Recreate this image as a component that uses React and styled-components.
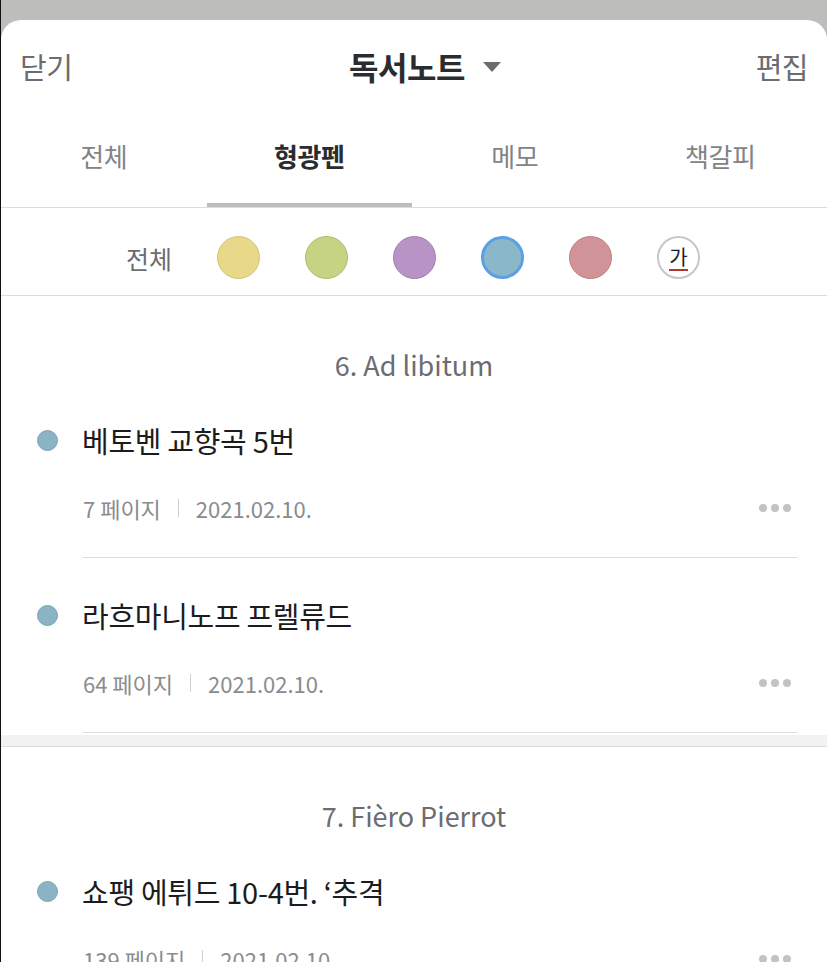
import { createGlobalStyle, styled } from "styled-components";

const GlobalStyle = createGlobalStyle`
  * { box-sizing: border-box; }
  html, body {
    margin: 0;
    padding: 0;
    background: #bdbebb;
    font-family: "Noto Sans CJK KR", "Noto Sans", sans-serif;
  }
`;

const Page = styled.div`
  width: 827px;
  height: 962px;
  overflow: hidden;
  background: #bdbebb;
  border-left: 1px solid #111;
  padding-top: 20px;
`;

const Sheet = styled.div`
  background: #fff;
  border-radius: 20px 20px 0 0;
  min-height: 942px;
`;

const Header = styled.div`
  height: 92px;
  display: grid;
  grid-template-columns: 1fr auto 1fr;
  align-items: center;
  padding: 0 19px 0 19px;
`;

const HeaderButton = styled.span`
  font-size: 29px;
  color: #6b6c70;
  justify-self: ${(p) => (p.$right ? "end" : "start")};
  letter-spacing: -0.5px;
`;

const Title = styled.div`
  display: flex;
  align-items: center;
  gap: 18px;
  font-size: 32px;
  font-weight: 700;
  color: #2b2c30;
  letter-spacing: -0.5px;
  margin-left: 22px;
`;

const Caret = styled.span`
  width: 0;
  height: 0;
  border-left: 9px solid transparent;
  border-right: 9px solid transparent;
  border-top: 10px solid #6b6c70;
  margin-top: 2px;
`;

const Tabs = styled.div`
  display: grid;
  grid-template-columns: repeat(4, 1fr);
  border-bottom: 1px solid #dcdcde;
  padding: 0 4px 0 0;
`;

const Tab = styled.div`
  height: 95px;
  display: flex;
  align-items: center;
  justify-content: center;
  padding-bottom: 4px;
  font-size: 26px;
  letter-spacing: -0.5px;
  font-weight: ${(p) => (p.$active ? 700 : 400)};
  color: ${(p) => (p.$active ? "#2b2c30" : "#828387")};
  border-bottom: 4px solid ${(p) => (p.$active ? "#bcbdc1" : "transparent")};
`;

const Filters = styled.div`
  height: 88px;
  display: flex;
  align-items: center;
  padding: 12px 0 0 125px;
  gap: 45px;
  border-bottom: 1px solid #dcdcde;
`;

const FilterLabel = styled.span`
  font-size: 25px;
  color: #6b6c70;
`;

const Swatch = styled.span`
  width: 43px;
  height: 43px;
  border-radius: 50%;
  flex-shrink: 0;
  background: ${(p) => p.$color};
  border: ${(p) => (p.$selected ? "3px solid #5b9fe8" : `1.5px solid ${p.$edge}`)};
  display: flex;
  align-items: center;
  justify-content: center;
`;

const TextSwatch = styled(Swatch)`
  background: #fff;
  border: 2px solid #c6c7ca;
  font-size: 20px;
  color: #1c1c1e;
  line-height: 1;
`;

const Ga = styled.span`
  display: inline-block;
  border-bottom: 2px solid #b8352c;
  padding-bottom: 2px;
  margin-top: 2px;
`;

const Section = styled.section`
  padding-top: 51px;
`;

const SectionTitle = styled.div`
  height: 36px;
  line-height: 36px;
  text-align: center;
  font-size: 27px;
  color: #6b6c70;
`;

const Item = styled.div`
  padding: 37px 0 0 0;
`;

const ItemTitle = styled.div`
  display: flex;
  align-items: center;
  height: 40px;
  padding-left: 36px;
  font-size: 29px;
  color: #1c1c1e;
  letter-spacing: -0.3px;
`;

const Dot = styled.span`
  width: 21px;
  height: 21px;
  border-radius: 50%;
  background: #8ab4c4;
  border: 1px solid #7aa3b3;
  margin-right: 24px;
  flex-shrink: 0;
`;

const Meta = styled.div`
  margin: 33px 30px 0 82px;
  height: 30px;
  display: flex;
  align-items: center;
  font-size: 22px;
  color: #8a8b8f;
`;

const Sep = styled.span`
  width: 1px;
  height: 18px;
  background: #cfd0d3;
  margin: 0 17px;
`;

const More = styled.span`
  margin-left: auto;
  margin-right: 6px;
  display: flex;
  gap: 4px;
`;

const MoreDot = styled.span`
  width: 8px;
  height: 8px;
  border-radius: 50%;
  background: #c2c3c6;
`;

const Divider = styled.div`
  margin: 34px 30px 0 82px;
  border-top: 1px solid #dcdcde;
`;

const Band = styled.div`
  height: 12px;
  margin-top: 2px;
  background: #f2f2f3;
  border-bottom: 1px solid #dcdcde;
`;

const tabs = ["전체", "형광펜", "메모", "책갈피"];

const swatches = [
  { color: "#e8d88a", edge: "#d4c476" },
  { color: "#c5d382", edge: "#adbd6c" },
  { color: "#b794c5", edge: "#a07fae" },
  { color: "#8ab8c8", edge: "#5b9fe8", selected: true },
  { color: "#d09498", edge: "#bb7f84" },
];

const sections = [
  {
    title: "6. Ad libitum",
    items: [
      { text: "베토벤 교향곡 5번", page: "7 페이지", date: "2021.02.10." },
      { text: "라흐마니노프 프렐류드", page: "64 페이지", date: "2021.02.10." },
    ],
  },
  {
    title: "7. Fièro Pierrot",
    items: [
      { text: "쇼팽 에튀드 10-4번. ‘추격", page: "139 페이지", date: "2021.02.10." },
    ],
  },
];

const NoteItem = ({ item }) => (
  <Item>
    <ItemTitle>
      <Dot />
      {item.text}
    </ItemTitle>
    <Meta>
      {item.page}
      <Sep />
      {item.date}
      <More>
        <MoreDot />
        <MoreDot />
        <MoreDot />
      </More>
    </Meta>
    <Divider />
  </Item>
);

export default function App() {
  return (
    <Page>
      <GlobalStyle />
      <Sheet>
        <Header>
          <HeaderButton>닫기</HeaderButton>
          <Title>
            독서노트
            <Caret />
          </Title>
          <HeaderButton $right>편집</HeaderButton>
        </Header>
        <Tabs>
          {tabs.map((t, i) => (
            <Tab key={t} $active={i === 1}>
              {t}
            </Tab>
          ))}
        </Tabs>
        <Filters>
          <FilterLabel>전체</FilterLabel>
          {swatches.map((s, i) => (
            <Swatch key={i} $color={s.color} $edge={s.edge} $selected={s.selected} />
          ))}
          <TextSwatch>
            <Ga>가</Ga>
          </TextSwatch>
        </Filters>
        {sections.map((sec, si) => (
          <div key={sec.title}>
            {si > 0 && <Band />}
            <Section>
              <SectionTitle>{sec.title}</SectionTitle>
              {sec.items.map((it) => (
                <NoteItem key={it.text} item={it} />
              ))}
            </Section>
          </div>
        ))}
      </Sheet>
    </Page>
  );
}
